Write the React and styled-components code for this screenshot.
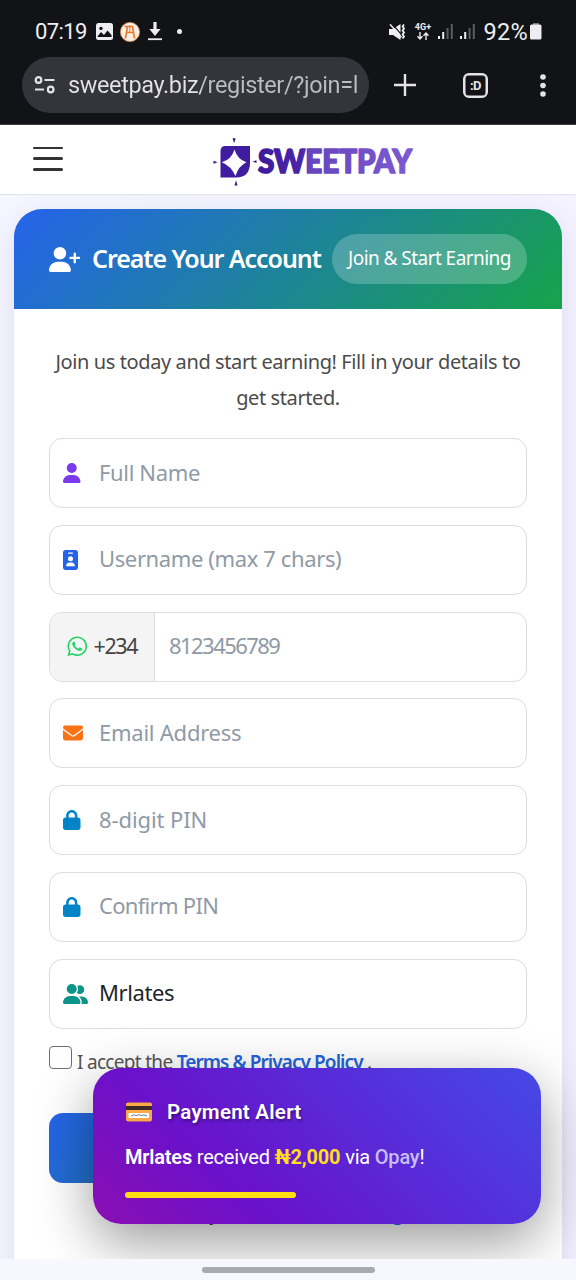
import React from 'react'
import styled, { createGlobalStyle } from 'styled-components'
import { FaUser, FaUserPlus, FaIdBadge, FaWhatsapp, FaEnvelope, FaLock, FaUserGroup } from 'react-icons/fa6'

const fields = [
    { id: 'name', icon: FaUser, w: 17.5, color: '#7c3aed', label: 'Full Name', spacing: '-0.35px' },
    { id: 'username', icon: FaIdBadge, w: 15, color: '#2563eb', label: 'Username (max 7 chars)', spacing: '-0.38px' },
    { id: 'phone', phone: true, label: '8123456789', spacing: '-1.55px' },
    { id: 'email', icon: FaEnvelope, w: 20, color: '#f97316', label: 'Email Address', spacing: '-0.24px' },
    { id: 'pin', icon: FaLock, w: 17.5, color: '#0284c7', label: '8-digit PIN', spacing: '-0.1px' },
    { id: 'confirm', icon: FaLock, w: 17.5, color: '#0284c7', label: 'Confirm PIN', spacing: '-0.7px' },
    { id: 'ref', icon: FaUserGroup, w: 25, color: '#0d9488', label: 'Mrlates', filled: true, spacing: '-0.4px' },
]

export default function App() {
    return (
        <Screen>
            <GlobalStyle />
            <StatusBar />
            <BrowserBar />
            <SiteHeader />
            <Page>
                <Card>
                    <CardHeader>
                        <UserPlus />
                        <Title>Create Your Account</Title>
                        <Pill>Join &amp; Start Earning</Pill>
                    </CardHeader>
                    <CardBody>
                        <Intro>
                            <Line>Join us today and start earning! Fill in your details to</Line>
                            <Line>get started.</Line>
                        </Intro>
                        <Fields>
                            {fields.map(f => <Field key={f.id} {...f} />)}
                        </Fields>
                        <Accept>
                            <Checkbox />
                            <span>I accept the <TermsLink>Terms &amp; Privacy Policy</TermsLink> .</span>
                        </Accept>
                        <Submit aria-label="Register" />
                        <Already>Already have an account? <b>Login</b></Already>
                    </CardBody>
                </Card>
                <PaymentAlert />
            </Page>
            <GestureBar><span /></GestureBar>
        </Screen>
    )
}

function StatusBar() {
    return (
        <StatusWrapper>
            <Clock>07:19</Clock>
            <svg width="17" height="17" viewBox="0 0 17 17">
                <rect width="17" height="17" rx="2.5" fill="#eeeef0" />
                <circle cx="5" cy="5.4" r="1.7" fill="#121317" />
                <path d="M1.5 13.5 L5 9 L8 12 L11.5 7.5 L15.5 12 V14 H1.5z" fill="#121317" />
            </svg>
            <svg className="coin" width="20" height="20" viewBox="0 0 20 20">
                <circle cx="10" cy="10" r="9.6" fill="#fbeee2" stroke="#e58a4d" strokeWidth=".8" />
                <path d="M5.5 16.5 L7.5 4.5 M4.5 4.5 H12.5 L14.5 16.5 M6.5 10.5 H13.500" fill="none" stroke="#e7792d" strokeWidth="1.6" />
                <path d="M9.8 3 V10" fill="none" stroke="#e7792d" strokeWidth="1" />
            </svg>
            <svg className="down" width="14" height="19" viewBox="0 0 14 19">
                <path d="M5.4 0h3.2v7h4L7 14 1.4 7h4z" fill="#eeeef0" />
                <path d="M0 16.3h14v1.8H0z" fill="#eeeef0" />
            </svg>
            <Dot />
            <Right>
                <svg width="17" height="16" viewBox="0 0 17 16">
                    <path d="M0 5h4L11.500 0v16L4 11H0z" fill="#eeeef0" />
                    <path d="M2.8 -.5 L12.5 10.6" stroke="#121317" strokeWidth="1.2" />
                    <path d="M1 .3 L12.500 13.5" stroke="#eeeef0" strokeWidth="1.5" />
                    <path d="M15 .5l-1.400 2 1.400 2-1.400 2 1.400 2-1.400 2 1.400 2-1.400 2" fill="none" stroke="#eeeef0" strokeWidth="1.8" />
                </svg>
                <Network>
                    <b>4G+</b>
                    <svg width="12" height="8" viewBox="0 0 12 8">
                        <path d="M3 0v6.5M.5 4.2 3 6.9l2.5-2.7M9 8V1.2M6.5 3.7 9 1l2.5 2.7" fill="none" stroke="#eeeef0" strokeWidth="1.4" />
                    </svg>
                </Network>
                <Signal />
                <Signal />
                <Percent>92%</Percent>
                <svg className="battery" width="12" height="17" viewBox="0 0 12 17">
                    <path d="M3 0h6v2H3z" fill="#77787b" />
                    <rect y="1.5" width="11.5" height="15" rx="1.5" fill="#eeeef0" />
                </svg>
            </Right>
        </StatusWrapper>
    )
}

function Signal() {
    return (
        <svg className="signal" width="15" height="15" viewBox="0 0 15 15">
            <path d="M0 12h2v3H0zM4.2 8h2v7h-2z" fill="#eeeef0" />
            <path d="M8.6 4h2v11h-2zM12.800 0h2v15h-2z" fill="#5c5d60" />
        </svg>
    )
}

function BrowserBar() {
    return (
        <BrowserWrapper>
            <Address>
                <svg width="22" height="18" viewBox="0 0 22 18" fill="none" stroke="#e3e3e8" strokeWidth="2.2">
                    <circle cx="4.5" cy="4" r="2.8" />
                    <path d="M10.5 4h10M1 13.500h9" />
                    <circle cx="16.7" cy="13.5" r="2.8" />
                </svg>
                <Url>sweetpay.biz/register/?join=l</Url>
            </Address>
            <svg className="plus" width="22" height="22" viewBox="0 0 22 22">
                <path d="M11 0v22M0 11h22" stroke="#e3e3e8" strokeWidth="2.4" />
            </svg>
            <Tabs>:D</Tabs>
            <svg className="more" width="6" height="23" viewBox="0 0 6 23" fill="#e3e3e8">
                <circle cx="3" cy="3" r="2.8" />
                <circle cx="3" cy="11.5" r="2.8" />
                <circle cx="3" cy="20" r="2.8" />
            </svg>
        </BrowserWrapper>
    )
}

function SiteHeader() {
    return (
        <HeaderWrapper>
            <Burger><i /><i /><i /></Burger>
            <Logo width="204" height="48" viewBox="0 0 204 48">
                <defs>
                    <linearGradient id="brand" gradientUnits="userSpaceOnUse" x1="44" y1="0" x2="200" y2="0">
                        <stop offset="0" stopColor="#3d1a9b" />
                        <stop offset=".29" stopColor="#4a27a8" />
                        <stop offset=".33" stopColor="#6544bd" />
                        <stop offset="1" stopColor="#7c5bd2" />
                    </linearGradient>
                </defs>
                <path d="M12.5 8H37v16.5Q37 39.5 23 39.5H7.5V13Q7.5 8 12.5 8z" fill="#3f1d9e" />
                <path d="M21.5 11.500Q24.500 21.500 33.500 24.300Q25.500 28 22.500 38Q18 28 8.800 24.300Q18.500 21.500 21.500 11.500z" fill="#fff" />
                <path d="M19.5 .3h3.2l-1.600 5zM21.5 47.500h3l-1.400-5.200zM.5 22.8v3l4-1.500zM43.5 22.300v2.600l-4-1.400z" fill="#2f1a78" />
                <text x="45" y="34.500" textLength="154" lengthAdjust="spacingAndGlyphs">SWEETPAY</text>
            </Logo>
        </HeaderWrapper>
    )
}

function Field(props) {
    const { icon: Icon, w, color, label, filled, phone, spacing } = props
    return (
        <FieldBox>
            {phone
                ? <Prefix><FaWhatsapp size={22.5} color="#25d366" /><span>+234</span></Prefix>
                : <IconSlot $w={w}><Icon color={color} /></IconSlot>}
            <FieldText $filled={filled} $phone={phone} $s={spacing}>{label}</FieldText>
        </FieldBox>
    )
}

function PaymentAlert() {
    return (
        <AlertBox>
            <AlertTitle>
                <svg width="28" height="20" viewBox="0 0 28 20">
                    <rect x="1" y="0.5" width="26" height="19" rx="2" fill="#f9a846" />
                    <path d="M1 4h26v4H1z" fill="#3b2a26" />
                    <rect x="3.5" y="11" width="20.5" height="5" fill="#fff" />
                    <path d="M6 14.2l3-1.5 2 1 3-1.2 2 1 3-.6 3 1" fill="none" stroke="#6d7f86" />
                </svg>
                <span>Payment Alert</span>
            </AlertTitle>
            <AlertText><b>Mrlates</b> received <Amount>₦2,000</Amount> via <Bank>Opay</Bank>!</AlertText>
            <Progress />
        </AlertBox>
    )
}

const GlobalStyle = createGlobalStyle`
*{ box-sizing:border-box; }
body{
    margin:0;
    font-family:'Noto Sans', sans-serif;
}
svg{
    flex-shrink:0;
    display:block;
}
`
const Screen = styled.div`
width:576px;
height:1280px;
overflow:hidden;
display:flex;
flex-direction:column;
background:#f5f6ff;
`
const StatusWrapper = styled.div`
height:57px;
flex-shrink:0;
padding:6px 34px 0 35px;
display:flex;
align-items:center;
background:#121317;
color:#eeeef0;
font-family:Roboto, sans-serif;
.coin{ margin-left:7px; }
.down{ margin-left:8px; }
`
const Clock = styled.span`
width:61px;
font-size:22px;
letter-spacing:-.6px;
white-space:nowrap;
`
const Dot = styled.i`
width:5px;
height:5px;
margin-left:15px;
border-radius:50%;
background:#eeeef0;
`
const Right = styled.div`
margin-left:auto;
display:flex;
align-items:center;
.signal{ margin-left:7px; }
.battery{ margin-left:2px; }
`
const Network = styled.div`
width:17px;
margin-left:8px;
display:flex;
flex-direction:column;
align-items:center;
font-size:9px;
line-height:8px;
b{ margin-bottom:1px; }
`
const Percent = styled.span`
margin-left:8px;
font-size:23.5px;
letter-spacing:.3px;
`
const BrowserWrapper = styled.div`
height:68px;
flex-shrink:0;
padding:0 30px 11px 22px;
display:flex;
align-items:center;
background:#121317;
border-bottom:1px solid #3a3b3e;
.plus{ margin-left:25px; }
.more{ margin-left:auto; }
`
const Address = styled.div`
width:347px;
height:56px;
padding:0 8px 0 12px;
display:flex;
align-items:center;
border-radius:28px;
background:#34353a;
`
const Url = styled.span`
width:293px;
margin-left:12px;
padding-bottom:1px;
overflow:hidden;
white-space:nowrap;
font-family:Roboto, sans-serif;
font-size:23.5px;
line-height:32px;
letter-spacing:-.38px;
color:transparent;
background:linear-gradient(90deg, #e3e3e8 45%, #bcbdc4 46%);
background-clip:text;
`
const Tabs = styled.div`
width:25px;
height:25px;
margin-left:47px;
display:flex;
align-items:center;
justify-content:center;
border:2px solid #e3e3e8;
border-radius:6px;
box-shadow:inset 0 0 0 .5px #e3e3e8;
color:#e3e3e8;
font:bold 13px Roboto, sans-serif;
letter-spacing:-.5px;
`
const HeaderWrapper = styled.header`
height:70px;
flex-shrink:0;
padding-left:33px;
display:flex;
align-items:center;
background:#fff;
border-bottom:1px solid #e2e3ea;
`
const Burger = styled.div`
width:30px;
height:24px;
display:flex;
flex-direction:column;
justify-content:space-between;
margin-top:-2px;
i{
    height:2.5px;
    border-radius:2px;
    background:#333;
}
`
const Logo = styled.svg`
margin:4px 0 0 150px;
text{
    font-family:Lato, sans-serif;
    font-weight:900;
    font-size:32px;
    fill:url(#brand);
    stroke:url(#brand);
    stroke-width:1.7px;
    stroke-linejoin:round;
}
`
const Page = styled.main`
position:relative;
height:1064px;
flex-shrink:0;
padding:14px 14px 0;
overflow:hidden;
background:linear-gradient(90deg, #f5f6ff, #f5f3ff);
`
const Card = styled.section`
height:1120px;
border-radius:28px;
overflow:hidden;
background:#fff;
box-shadow:0 8px 32px rgba(60, 60, 130, .12);
`
const CardHeader = styled.div`
height:100px;
padding:0 35px;
display:flex;
align-items:center;
color:#fff;
background:linear-gradient(135deg, #2563eb, #16a34a);
`
const UserPlus = styled(FaUserPlus)`
width:31.25px;
height:25px;
`
const Title = styled.h1`
width:240px;
margin:-3px 0 0 11.75px;
white-space:nowrap;
font-size:25px;
font-weight:600;
letter-spacing:-1.05px;
`
const Pill = styled.span`
width:195px;
height:50px;
padding-bottom:2px;
display:flex;
flex-shrink:0;
align-items:center;
justify-content:center;
border-radius:25px;
background:rgba(255, 255, 255, .22);
font-size:19px;
letter-spacing:-.55px;
white-space:nowrap;
`
const CardBody = styled.div`
padding:35px 35px 0;
`
const Intro = styled.div`
text-align:center;
color:#4b4b4b;
`
const Line = styled.div`
font-size:20px;
line-height:36px;
white-space:nowrap;
letter-spacing:-.4px;
`
const Fields = styled.div`
margin-top:22px;
display:flex;
flex-direction:column;
gap:16.8px;
`
const FieldBox = styled.div`
height:70px;
display:flex;
align-items:center;
overflow:hidden;
border:1px solid #dcdde0;
border-radius:13px;
`
const IconSlot = styled.div`
width:49px;
padding-left:13px;
svg{
    width:${p => p.$w}px;
    height:20px;
}
`
const Prefix = styled.div`
width:105px;
height:100%;
padding-left:16px;
display:flex;
align-items:center;
gap:5px;
background:#f4f4f4;
border-right:1px solid #dcdde0;
color:#444;
font-size:21.5px;
letter-spacing:-1.4px;
span{ margin-top:-3px; }
`
const FieldText = styled.span`
margin-top:-3px;
margin-left:${p => p.$phone ? '14px' : '0'};
font-size:22px;
white-space:nowrap;
letter-spacing:${p => p.$s};
color:${p => p.$filled ? '#212529' : '#8f9aa6'};
`
const Accept = styled.div`
margin-top:17px;
display:flex;
align-items:flex-start;
white-space:nowrap;
font-size:19px;
line-height:33px;
letter-spacing:-.7px;
color:#555;
`
const Checkbox = styled.i`
width:23px;
height:23px;
margin-right:5px;
border:1.5px solid #6f6f6f;
border-radius:4px;
background:#fff;
`
const TermsLink = styled.a`
color:#2563d9;
font-weight:600;
letter-spacing:-.92px;
text-decoration:underline;
`
const Submit = styled.button`
width:100%;
height:70px;
margin-top:34px;
display:block;
border:0;
border-radius:14px;
background:linear-gradient(135deg, #2563eb, #16a34a);
`
const Already = styled.p`
margin:16px 0 0;
text-align:center;
font-size:19px;
line-height:28px;
letter-spacing:-.65px;
color:#333;
b{ color:#2563eb; }
`
const AlertBox = styled.aside`
position:absolute;
left:93px;
bottom:35px;
width:448px;
height:156px;
padding:28px 32px;
border-radius:28px;
color:#fff;
font-family:Roboto, sans-serif;
background:linear-gradient(45deg, #8a0eb2 0%, #6a11cb 30%, #4449e5 100%);
box-shadow:0 18px 56px rgba(0, 0, 0, .4);
`
const AlertTitle = styled.div`
height:32px;
display:flex;
align-items:center;
gap:14px;
font-size:20.5px;
font-weight:600;
letter-spacing:.25px;
text-shadow:1px 2px 3px rgba(0, 0, 0, .4);
`
const AlertText = styled.p`
margin:15px 0 0;
font-size:20px;
line-height:28px;
white-space:nowrap;
letter-spacing:-.2px;
b{ font-weight:600; }
`
const Amount = styled.span`
font-weight:700;
color:#ffdd1f;
`
const Bank = styled.span`
font-weight:500;
color:#c9bdf8;
`
const Progress = styled.div`
width:171px;
height:6px;
margin-top:21px;
border-radius:3px;
background:#ffdf12;
`
const GestureBar = styled.div`
height:21px;
flex-shrink:0;
display:flex;
justify-content:center;
padding-top:8px;
background:#f7f8ff;
span{
    width:173px;
    height:5.5px;
    border-radius:3px;
    background:#a9aaaf;
}
`
